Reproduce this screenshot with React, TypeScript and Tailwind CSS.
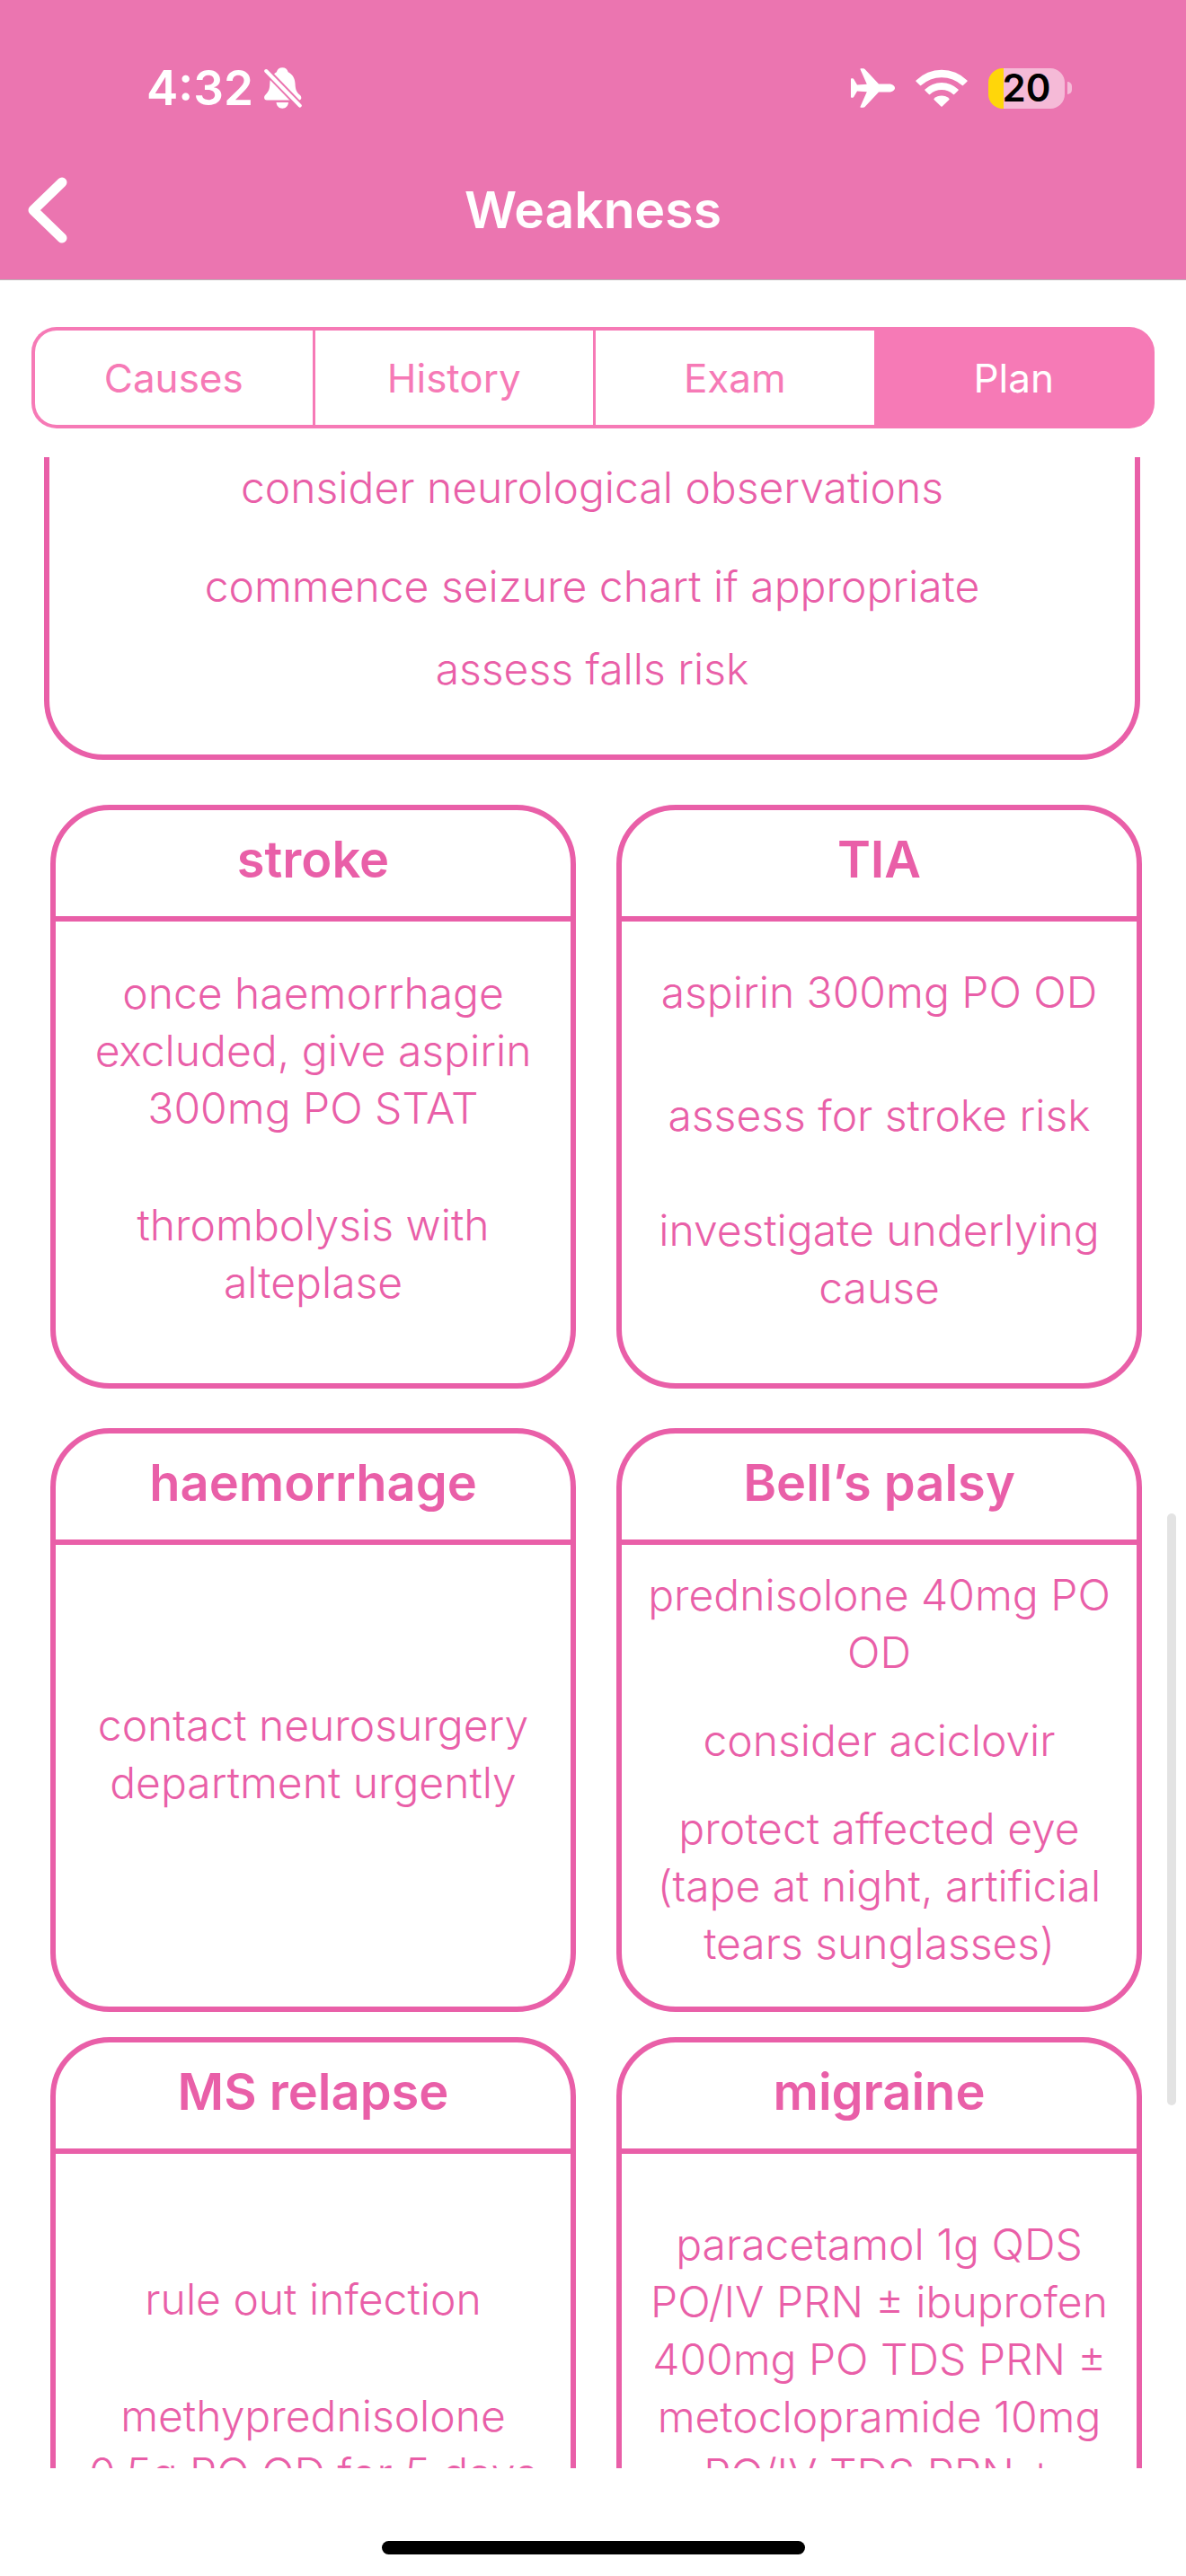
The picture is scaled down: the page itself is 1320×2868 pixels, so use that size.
import React, { useState } from "react";

const TABS = ["Causes", "History", "Exam", "Plan"];

type Condition = { title: string; layout: string; items: string[] };

const ROWS: { spacing: string; cards: Condition[] }[] = [
  {
    spacing: "mt-[50px]",
    cards: [
      {
        title: "stroke",
        layout: "flex flex-col gap-[66px] pt-12",
        items: ["once haemorrhage excluded, give aspirin 300mg PO STAT", "thrombolysis with alteplase"],
      },
      {
        title: "TIA",
        layout: "grid grid-rows-[111px_137px_192px] items-end",
        items: ["aspirin 300mg PO OD", "assess for stroke risk", "investigate underlying cause"],
      },
    ],
  },
  {
    spacing: "mt-11",
    cards: [
      {
        title: "haemorrhage",
        layout: "flex flex-col pt-[169px]",
        items: ["contact neurosurgery department urgently"],
      },
      {
        title: "Bell’s palsy",
        layout: "flex flex-col gap-[34px] pt-6",
        items: [
          "prednisolone 40mg PO OD",
          "consider aciclovir",
          "protect affected eye (tape at night, artificial tears sunglasses)",
        ],
      },
    ],
  },
  {
    spacing: "mt-7",
    cards: [
      {
        title: "MS relapse",
        layout: "flex flex-col gap-[66px] pt-[130px]",
        items: ["rule out infection", "methyprednisolone 0.5g PO OD for 5 days"],
      },
      {
        title: "migraine",
        layout: "flex flex-col gap-[34px] pt-[69px]",
        items: ["paracetamol 1g QDS PO/IV PRN ± ibuprofen 400mg PO TDS PRN ± metoclopramide 10mg PO/IV TDS PRN ±"],
      },
    ],
  },
];

function BellOff() {
  return (
    <svg width="42" height="46" viewBox="0 0 42 46" fill="none" aria-hidden="true">
      <path
        d="M20.300 .3C23.500 .3 26 2.300 26.700 5.200C31.500 7.500 34.200 12 34.500 18C34.800 25 36 27.500 39.500 30.500C42.500 33.200 41.500 36.500 38.500 36.500H3C-.3 36.500 -.8 32.800 1.500 30.500C4.800 27.200 6.200 24.500 6.300 18C6.400 12 9.500 7.500 13.800 5.200C14.500 2.300 17 .3 20.300 .3Z"
        fill="#fff"
      />
      <path d="M13.500 39H27C26.600 43 24 45.700 20.300 45.700C16.500 45.700 13.900 43 13.500 39Z" fill="#fff" />
      <path d="M-1 .5L43 46" stroke="#eb75b0" strokeWidth="8" />
      <path d="M2.200 4L39.800 42.600" stroke="#fff" strokeWidth="4" strokeLinecap="round" />
    </svg>
  );
}

function Airplane() {
  return (
    <svg width="49" height="44" viewBox="0 0 49 44" fill="#fff" aria-hidden="true">
      <path d="M31 17.500H42C46 17.500 49 19.500 49 22C49 24.500 46 26.500 42 26.500H31L15.800 42.800C15.200 43.500 14.600 43.700 13.800 43.700H11.400C10.600 43.700 10.300 43.200 10.600 42.400L17.800 26.200L7 25.500L3.200 32C2.900 32.600 2.500 32.800 2 32.800H.8C.3 32.800 0 32.500 0 32V12C0 11.500 .3 11.200 .8 11.200H2C2.500 11.200 2.900 11.400 3.200 12L7 18.500L17.800 17.800L10.600 1.600C10.300 .8 10.600 .3 11.400 .3H13.800C14.600 .3 15.200 .5 15.800 1.200Z" />
    </svg>
  );
}

function Wifi() {
  return (
    <svg width="58" height="42" viewBox="0 0 58 42" fill="#fff" aria-hidden="true">
      <path d="M.6 12.500A40 40 0 0 1 57.400 12.500Q58 13.200 57.400 13.800L53 18.100Q52.400 18.600 51.800 18.100A33.500 33.500 0 0 0 6.200 18.100Q5.600 18.600 5 18.100L.6 13.800Q0 13.200 .6 12.500Z" />
      <path d="M10.500 22.500A26.500 26.500 0 0 1 47.500 22.500Q48.100 23.100 47.500 23.700L43.100 28Q42.500 28.500 41.900 28A19.500 19.500 0 0 0 16.100 28Q15.500 28.500 14.900 28L10.500 23.700Q9.900 23.100 10.500 22.500Z" />
      <path d="M20.600 32.700A12.500 12.500 0 0 1 37.400 32.700Q38 33.300 37.400 33.900L29.600 41.500Q29 42 28.400 41.500L20.600 33.900Q20 33.300 20.600 32.700Z" />
    </svg>
  );
}

function Battery() {
  return (
    <div className="flex items-center gap-[3px]">
      <div className="flex h-[45px] w-[85px] items-center justify-center rounded-2xl bg-[linear-gradient(to_right,#ffd60a_20%,#f5bad7_20%)] text-[42px] leading-none font-semibold text-black">
        20
      </div>
      <div className="h-[14px] w-[5px] rounded-r-full bg-[#f5bad7]" />
    </div>
  );
}

function Card({ title, layout, items }: Condition) {
  return (
    <section className="h-[650px] overflow-hidden rounded-[66px] border-6 border-[#e95fa8]">
      <h2 className="flex h-[124px] items-center justify-center border-b-6 border-[#e95fa8] pb-2 text-[56px] leading-[64px] font-semibold">
        {title}
      </h2>
      <div className={`px-5 ${layout}`}>
        {items.map((item) => (
          <p key={item}>{item}</p>
        ))}
      </div>
    </section>
  );
}

export default function App() {
  const [active, setActive] = useState("Plan");

  return (
    <div className="flex h-screen flex-col bg-white font-['Inter',sans-serif]">
      <header className="border-b border-[#b8b4b6] bg-[#eb75b0] pt-[70px] pb-[39px] text-white">
        <div className="flex h-14 items-center justify-between pr-[127px] pl-[163px]">
          <div className="flex items-center gap-3 text-[53px] leading-none font-semibold">
            4:32
            <BellOff />
          </div>
          <div className="flex items-center gap-[23px]">
            <Airplane />
            <Wifi />
            <Battery />
          </div>
        </div>
        <div className="mt-[70px] grid h-[76px] grid-cols-[1fr_auto_1fr] items-center">
          <button type="button" aria-label="Back" className="ml-[30px] justify-self-start">
            <svg width="46" height="76" viewBox="0 0 46 76" fill="none" aria-hidden="true">
              <path d="M39 7L7 38L39 69" stroke="#fff" strokeWidth="11" strokeLinecap="round" strokeLinejoin="round" />
            </svg>
          </button>
          <h1 className="text-[57px] leading-[64px] font-semibold">Weakness</h1>
        </div>
      </header>

      <nav className="mx-[35px] mt-[52px] grid h-[113px] shrink-0 grid-cols-4">
        {TABS.map((tab) => (
          <button
            key={tab}
            type="button"
            aria-pressed={tab === active}
            onClick={() => setActive(tab)}
            className={`border-y-4 border-l-3 border-[#f67ab6] text-[44px] first:rounded-l-[28px] first:border-l-4 last:rounded-r-[28px] last:border-r-4 ${
              tab === active ? "bg-[#f67ab6] text-white" : "text-[#f67ab6]"
            }`}
          >
            {tab}
          </button>
        ))}
      </nav>

      <main className="relative mt-8 min-h-0 flex-1 overflow-hidden text-center text-[48px] leading-[64px] font-light text-[#e95fa8]">
        <section className="mr-[51px] ml-[49px] grid h-[337px] grid-rows-[66px_110px_92px] items-end rounded-b-[66px] border-6 border-t-0 border-[#e95fa8]">
          <p>consider neurological observations</p>
          <p>commence seizure chart if appropriate</p>
          <p>assess falls risk</p>
        </section>
        {ROWS.map((row) => (
          <div key={row.cards[0].title} className={`mr-[49px] ml-14 grid grid-cols-2 gap-x-[45px] ${row.spacing}`}>
            {row.cards.map((card) => (
              <Card key={card.title} {...card} />
            ))}
          </div>
        ))}
        <div className="absolute top-[1176px] right-[11px] h-[659px] w-[10px] rounded-full bg-[#e3e3e3]" />
      </main>

      <footer className="flex h-[120px] shrink-0 items-end justify-center pb-6">
        <div className="h-[15px] w-[471px] rounded-full bg-black" />
      </footer>
    </div>
  );
}
